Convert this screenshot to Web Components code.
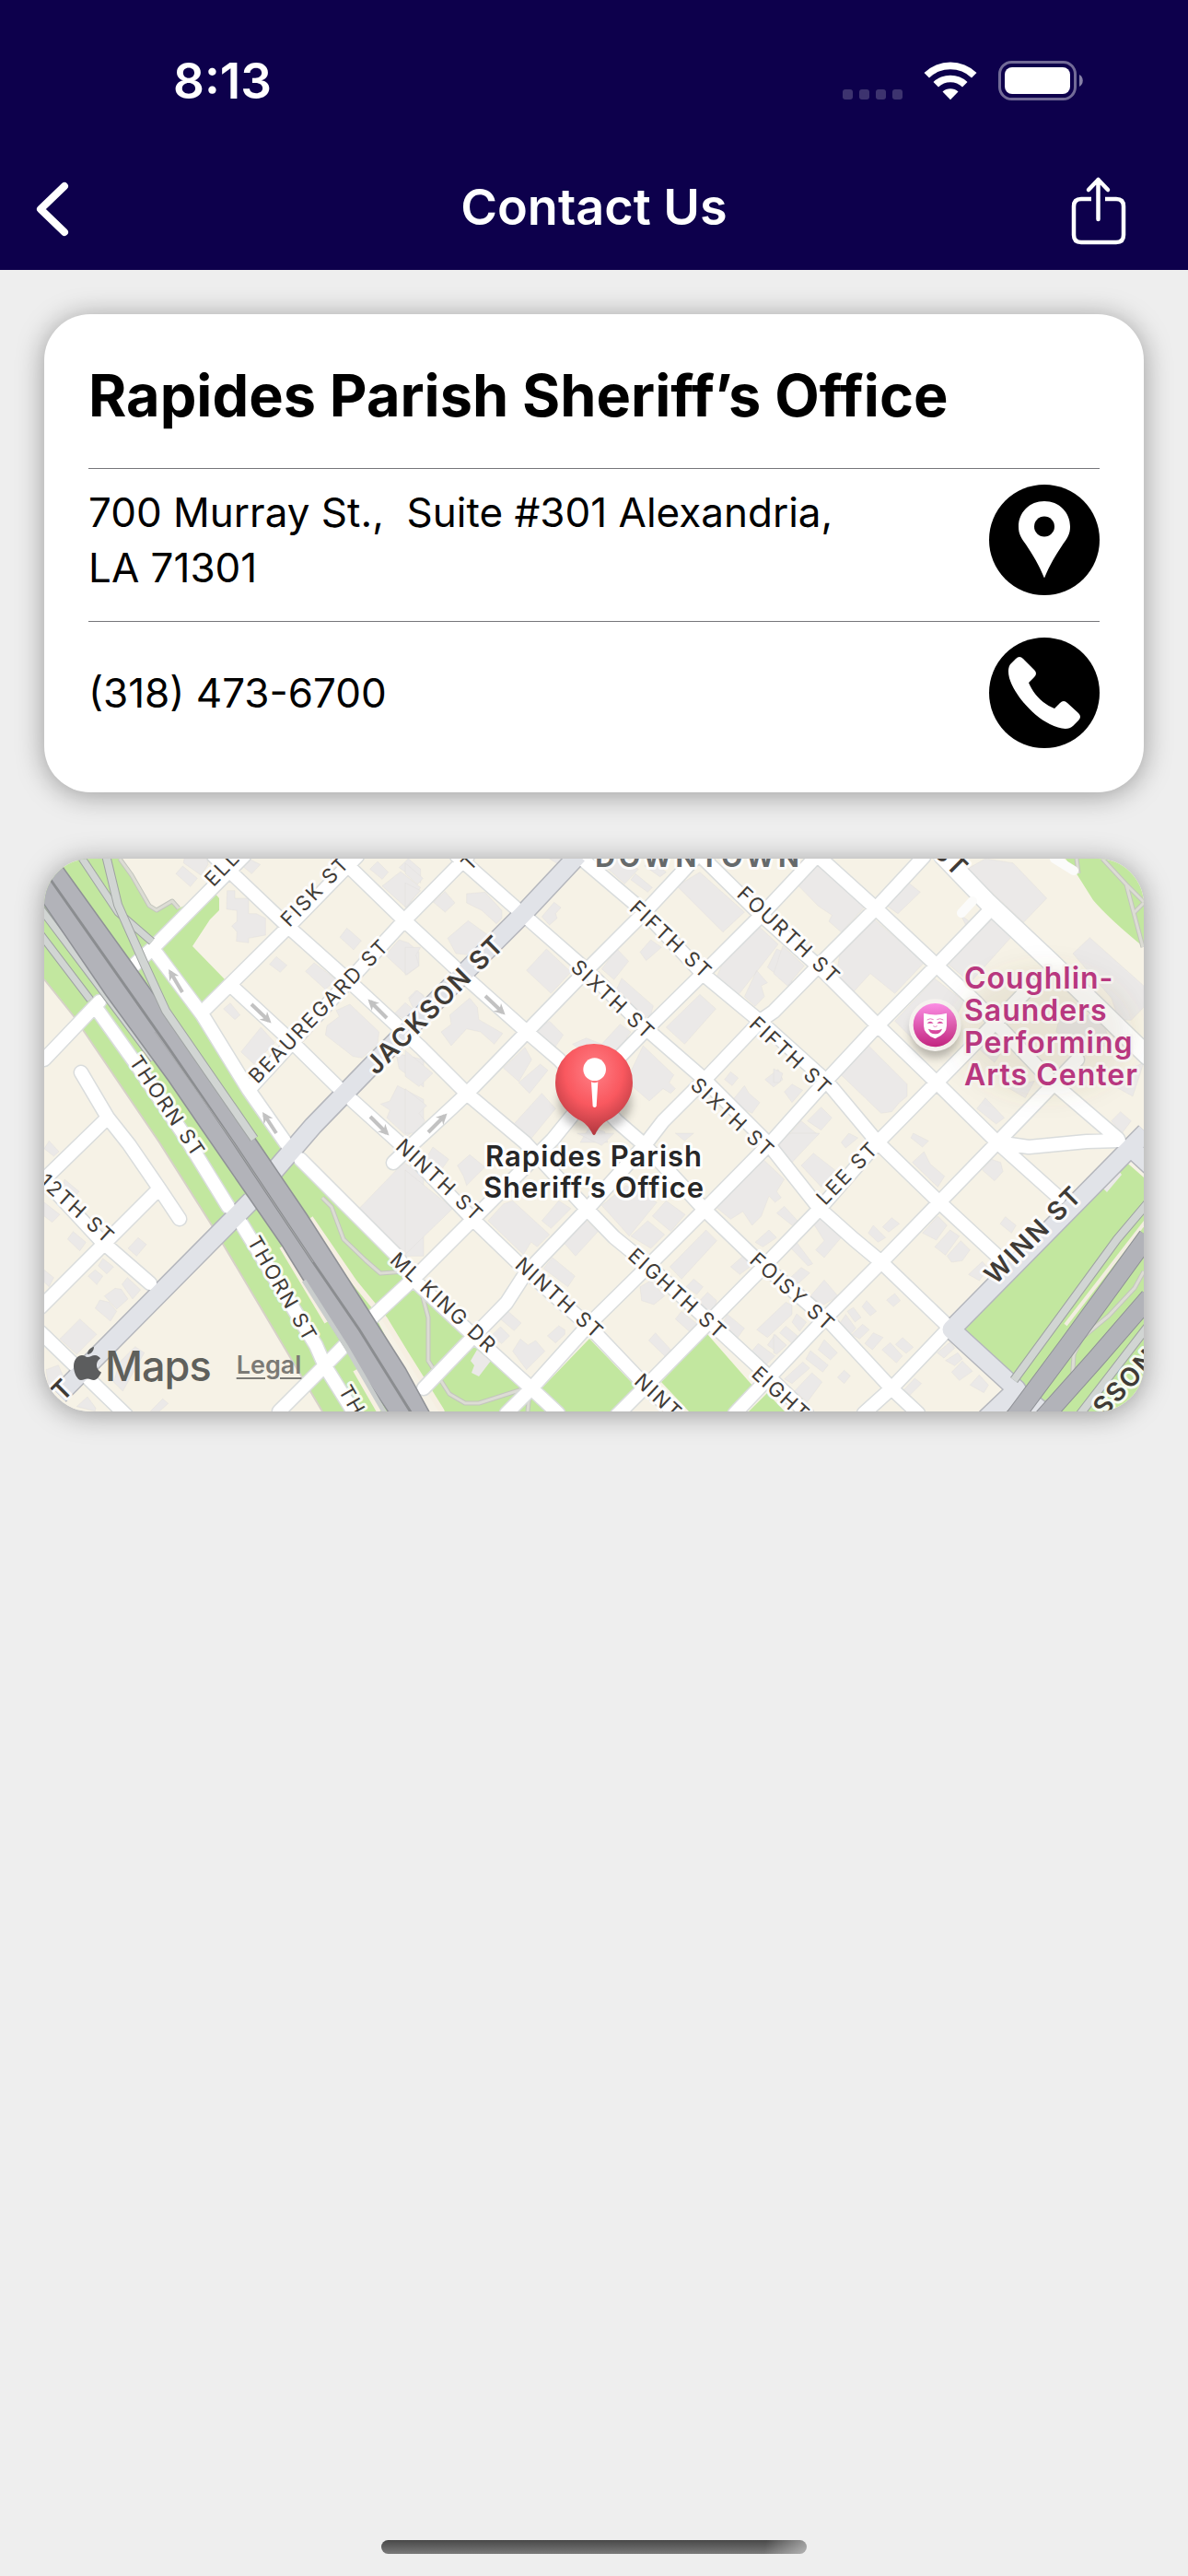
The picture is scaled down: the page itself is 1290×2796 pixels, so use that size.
<!DOCTYPE html>
<html lang="en">
<head>
<meta charset="utf-8">
<meta name="viewport" content="width=device-width, initial-scale=1">
<title>Contact Us</title>
<style>
html, body { margin: 0; background: #eee; }
body { font-family: Inter, "Liberation Sans", sans-serif; color: #000; }
</style>
</head>
<body>
<contact-page>
  <status-bar slot="top" time="8:13"></status-bar>
  <nav-bar slot="top">Contact Us</nav-bar>
  <contact-card>
    <span slot="name">Rapides Parish Sheriff’s Office</span>
    <contact-row icon="place" href="#directions" label="Directions">700 Murray St.,&nbsp; Suite #301 Alexandria, LA 71301</contact-row>
    <contact-row icon="phone" href="tel:+13184736700" label="Call">(318) 473-6700</contact-row>
  </contact-card>
  <street-map></street-map>
  <home-indicator slot="bottom"></home-indicator>
</contact-page>

<script>
const define = (name, html) => customElements.define(name, class extends HTMLElement {
  connectedCallback() {
    if (this.shadowRoot) return;
    const t = document.createElement('template');
    t.innerHTML = typeof html === 'function' ? html(this) : html;
    this.attachShadow({ mode: 'open' }).append(t.content.cloneNode(true));
  }
});

define('contact-page', `
<style>
:host { display: flex; flex-direction: column; min-height: 100vh; }
header { background: #0d004c; color: #fff; }
main { display: flex; flex-direction: column; gap: 72px; padding: 48px; }
footer { margin-top: auto; }
</style>
<header><slot name="top"></slot></header>
<main><slot></slot></main>
<footer><slot name="bottom"></slot></footer>`);

define('status-bar', el => `
<style>
:host { display: flex; align-items: center; justify-content: space-between; height: 174px; padding: 0 112px 0 188px; }
time { font-size: 53px; font-weight: 600; line-height: 60px; padding-top: 2px; }
div { display: flex; align-items: flex-end; gap: 23px; height: 43px; }
svg { display: block; }
</style>
<time>${el.getAttribute('time')}</time>
<div>
  <svg width="65" height="12" viewBox="0 0 65 12" fill="#fff" fill-opacity=".2"><rect width="11" height="11" rx="3"/><rect x="18" width="11" height="11" rx="3"/><rect x="36" width="11" height="11" rx="3"/><rect x="54" width="11" height="11" rx="3"/></svg>
  <svg width="58" height="43" viewBox="0 0 58 43" fill="#fff"><path d="M.5 13 A41 41 0 0 1 57.500 13 L52 18.500 A33 33 0 0 0 6 18.500Z"/><path d="M10.500 23 A27 27 0 0 1 47.500 23 L42 28.500 A19 19 0 0 0 16 28.500Z"/><path d="M20.500 33.500 A13 13 0 0 1 37.500 33.500 L29 42.300Z"/></svg>
  <svg width="94" height="43" viewBox="0 0 94 43"><rect x="1.500" y="1.500" width="82" height="40" rx="13" fill="none" stroke="#fff" stroke-opacity=".42" stroke-width="3"/><rect x="7" y="7" width="71" height="29" rx="8" fill="#fff"/><path d="M88 15 A7.500 7.500 0 0 1 88 28Z" fill="#fff" fill-opacity=".5"/></svg>
</div>`);

define('nav-bar', `
<style>
:host { display: grid; grid-template-columns: 140px 1fr 140px; align-items: center; height: 101px; padding-bottom: 18px; }
h1 { margin: 0; font-size: 54px; font-weight: 600; line-height: 66px; text-align: center; }
button { display: flex; background: none; border: 0; margin: 0; padding: 4px 0 0; color: inherit; width: 100%; }
.back { padding-left: 36px; }
.share { justify-content: flex-end; padding: 8px 67px 0 0; }
</style>
<button class="back" aria-label="Back"><svg width="42" height="64" viewBox="0 0 42 64" fill="none" stroke="#fff" stroke-width="8" stroke-linecap="round" stroke-linejoin="round"><path d="M34 7 L8 32 L34 57"/></svg></button>
<h1><slot></slot></h1>
<button class="share" aria-label="Share"><svg width="61" height="76" viewBox="0 0 61 76" fill="none" stroke="#fff" stroke-width="4.500" stroke-linecap="round" stroke-linejoin="round"><path stroke-linecap="butt" d="M23 25 H12 Q4 25 4 33 V64 Q4 72 12 72 H50 Q58 72 58 64 V33 Q58 25 50 25 H38"/><path d="M30.500 47 V4 M20 15 L30.500 4 L41 15"/></svg></button>`);

define('contact-card', `
<style>
:host { display: block; background: #fff; border-radius: 50px; padding: 0 48px 20px; box-shadow: 0 3px 30px rgba(0,0,0,.36); }
h2 { margin: 0; padding: 48px 0 39px; font-size: 63px; font-weight: 700; line-height: 80px; }
</style>
<h2><slot name="name"></slot></h2>
<slot></slot>`);

const rowIcons = {
  place: '<path fill="#fff" d="M60 18 C44 18 32 30 32 45.500 C32 54 35 58 40 65 C48 77 54 87 60 101.500 C66 87 72 77 80 65 C85 58 88 54 88 45.500 C88 30 76 18 60 18Z"/><circle cx="60" cy="45.500" r="11"/>',
  phone: '<path fill="#fff" d="M29 23 Q33 19 37 23 L49 35 Q53 39 49 43 L43 49 C48 61 58 72 71 77 L77 71 Q81 67 85 71 L97 82 Q101 86 97 90 L91 96 C86 101 76 99 66 94 C46 84 27 61 22 44 C20 36 21 31 24 28Z"/>'
};
define('contact-row', el => `
<style>
:host { display: flex; align-items: flex-start; justify-content: space-between; gap: 80px; border-top: 1px solid #76767a; padding: 17px 0 28px; }
p { margin: 0; flex: 1; max-width: 860px; min-height: 120px; display: flex; align-items: center; font-size: 44px; line-height: 60px; }
a, svg { display: block; color: #000; }
</style>
<p><span><slot></slot></span></p>
<a href="${el.getAttribute('href')}" aria-label="${el.getAttribute('label')}"><svg width="120" height="120" viewBox="0 0 120 120"><circle cx="60" cy="60" r="60"/>${rowIcons[el.getAttribute('icon')]}</svg></a>`);

/* ---- street map: geometry in map units, origin of the view at 48,932 ---- */
const streets = [
  '48,1150 108,1087', '145,1048 165,1030 265,929', '220,1098 312,1007 388,929', '270,1183 440,998 508,929',
  '427,1262 450,1240 490,1203 507,1187 572,1120 637,1053 700,990 757,929',
  '303,1532 355,1480 407,1427 450,1387 512,1325 600,1237 673,1147 702,1117 763,1057 823,997 886,930',
  '460,1507 510,1455 550,1414 570,1383 637,1313 700,1243 720,1217 767,1170 827,1107 840,1098 890,1047 950,987 1003,930',
  '550,1534 577,1507 640,1437 700,1378 765,1313 840,1237 897,1173 953,1113 1017,1048 1073,990',
  '670,1536 703,1503 768,1437 828,1376 890,1312 953,1240 1017,1175 1120,1070',
  '798,1534 840,1490 897,1430 957,1370 1020,1305 1083,1240 1170,1150', '938,1534 968,1507 1030,1442',
  '232,929 312,1005 377,1063 457,1137 507,1187 570,1240 637,1312 667,1343 700,1370 773,1437 823,1483 876,1534',
  '367,929 440,1000 508,1063 572,1120 607,1150 670,1217 700,1243 765,1313 817,1363 903,1437 968,1507 997,1534',
  '496,929 573,997 637,1053 702,1117 763,1170 833,1240 890,1312 927,1345 957,1370 1030,1440',
  '628,929 700,990 763,1057 827,1110 897,1173 953,1240 1020,1305 1087,1367',
  '761,929 823,990 890,1050 953,1113 1017,1175 1083,1240 1150,1300', '888,929 950,985 1017,1048 1060,1088 1143,1175 1214,1236',
  '250,1069 313,1127 370,1183 433,1240 513,1323 570,1378 640,1440 700,1503 733,1534',
  '105,1095 150,1158 200,1232 248,1310', '262,1328 300,1390 343,1460 353,1483 386,1536',
  '170,1035 220,1102 270,1183 317,1250', '326,1258 430,1362 447,1387 507,1443 577,1507 606,1534',
  '88,1164 117,1213 140,1242 173,1290 195,1323', '117,1213 44,1284', '173,1290 44,1419',
  '44,1276 110,1347 163,1393', '44,1446 137,1536', '1083,1240 1117,1245 1180,1239 1215,1238'
];
const avenues = ['64,1514 273,1303', '290,1280 340,1222 407,1153 567,993 628,928', '1244,1229 1033,1443 1104,1508 1064,1546', '1227,1245 1252,1268', '1110,1514 1134,1534'];
const joined = list => list.map(p => 'M' + p.replace(/ /g, 'L')).join('');

const tiles = [
 [40, 920, '480,36 555,36 558,55 535,90 478,50|475,60 523,100 500,127 453,85|690,36 728,55 700,85 672,62|620,140 645,140 645,165 690,165 690,215 715,215 745,230 745,285 690,295 690,310 650,305 652,275 635,255 652,240 652,205 618,200|780,355 815,383 793,406 758,380|1010,262 1057,303 1032,333 987,292|903,375 975,430 940,462 875,403|630,506 662,545 645,560 608,525|730,585 775,635 707,705 665,665|1020,510 1115,600 1110,640 1060,685 1030,680 940,610 945,580 985,550 975,530|1110,45 1145,80 1125,103 1085,70|1185,78 1250,130 1205,197 1125,125|1210,36 1250,70 1250,115 1180,65|1180,300 1210,310 1245,340 1245,385 1205,415 1135,350|1170,670 1260,690 1260,780 1180,720|1175,775 1260,820 1260,900 1205,940 1140,880 1150,855 1120,835 1150,825|1235,465 1260,480 1260,510 1210,490|1200,505 1230,530 1200,560 1165,540'],
 [440, 920, '0,50 58,100 40,120 0,85|0,115 50,140 0,195|130,143 162,180 130,210 92,178|200,150 260,145 315,205 315,230 297,248 250,205 200,180|205,238 270,285 255,310 215,350 165,345 138,295|0,325 50,325 35,350 45,385 0,415|485,178 507,195 490,215 495,230 470,252 445,225|460,330 540,405 475,475 395,400|40,465 75,500 30,530 12,495|210,490 235,520 240,560 318,605 290,640 245,600 200,590 150,645 117,600 150,575 145,545|470,565 515,610 485,655 415,600|590,620 640,640 700,575 735,600 680,680 630,700 545,640|690,330 728,370 680,430 640,395|800,300 835,325 785,368 765,340|705,425 808,515 800,545 760,560 680,480|960,80 1105,210 1035,275 885,125|690,36 760,70 715,118 650,60|750,85 805,130 790,145 735,105|800,36 850,80 830,95 780,60|960,478 1012,525 910,640 850,585|775,645 875,740 860,765 880,785 865,800 840,785 795,825 720,760|1145,250 1215,315 1085,480 1015,420 1035,375|1210,330 1260,350 1260,455 1180,390|1145,400 1180,440 1160,450 1170,485 1140,517 1105,485|1215,722 1230,755 1200,780 1172,755|1060,730 1085,750 1065,775 1040,755|1105,775 1120,800 1155,830 1130,865 1060,830|0,660 90,735 45,778 0,745|0,785 70,840 45,865 65,890 30,930 0,930|390,650 412,690 370,762 320,718|440,705 465,725 405,800 370,765|445,800 490,850 400,960 385,960 345,910|600,910 650,925 660,960 570,960|470,36 515,36 500,55'],
 [840, 920, '135,50 300,190 220,275 180,240 190,220 145,190 72,115|440,115 478,145 405,215 370,190|690,36 780,50 890,165 815,243 630,70|330,235 490,375 395,475 315,410 260,470 205,410 215,350|715,215 780,285 640,440 570,380|1030,293 1206,450 1206,520 1165,562 1125,560 1100,490 975,345|525,427 620,500 580,580 600,620 470,640 395,565|310,645 435,770 435,810 410,830 385,860 350,865 220,740|30,320 100,385 45,450 0,410|155,845 190,880 155,920 110,890|690,815 752,880 725,900 662,850|1130,860 1165,890 1135,930 1100,890|90,890 145,935 110,960 30,960|60,770 95,790 60,830 35,795|0,720 30,735 20,765 0,765|930,560 1060,540 1100,640 1020,660 920,600|690,600 760,640 720,700 650,640|760,780 850,760 820,815|1080,760 1206,700 1170,810|610,220 635,238 625,250'],
 [40, 1230, '40,25 72,60 55,75 24,50|90,150 138,190 118,212 85,180|24,225 75,265 50,290 24,270|118,320 160,355 140,383 100,345|330,340 357,362 325,400 297,375|215,408 250,435 228,458 200,432|190,445 215,465 195,493 167,465|24,445 55,470 40,500 24,485|295,470 338,510 312,540 277,492|255,505 275,508 297,540 260,573 220,530|205,543 235,550 260,580 240,612 190,570|140,605 195,655 130,720 75,670|320,695 350,715 280,840 250,810 270,745|410,865 428,880 400,905 370,905|165,858 192,895 190,905 130,890|30,770 70,755 90,800 40,840|1195,95 1260,140 1260,400 1200,400 1050,245'],
 [440, 1230, '0,120 155,245 0,395|90,45 142,85 110,130 60,95|210,70 260,110 200,170 190,140 170,105|350,220 470,330 430,370 410,355 385,395 270,285 320,230|500,220 540,245 475,310 445,285|590,285 628,320 555,400 515,355|480,405 553,465 530,500 450,440|335,580 378,618 355,643 310,605|310,630 340,660 315,685 280,660|375,670 400,690 425,675 455,710 395,770 350,710|500,627 520,640 520,655 490,683 463,660|640,235 720,170 820,225 730,335|790,285 845,330 800,375 735,335|850,220 912,265 865,320 805,270|980,315 1015,350 900,475 862,435|765,500 800,480 845,530 810,558 770,545|815,650 865,705 845,725 793,675|900,580 950,620 925,645 880,605|940,475 970,500 950,525 915,500|985,518 1015,545 1000,590 955,550|1155,75 1235,150 1210,190 1225,210 1205,225 1185,205 1160,270 1130,300 1100,255 1060,280 1005,235|1185,315 1210,340 1165,370 1140,355|1050,590 1105,635 1080,670 1030,625|1100,400 1130,430 1090,460 1060,435|1240,550 1260,560 1260,590 1180,665 1145,640|1150,685 1205,725 1170,760 1120,720|1205,655 1240,690 1215,715 1180,690|880,0 940,0 910,25|560,0 680,0 640,40'],
 [840, 1230, '20,10 60,0 150,0 60,95 20,60|130,65 200,120 155,175 90,105|245,0 275,15 235,48 220,30|455,0 505,25 485,45 447,15|490,60 510,100 557,140 535,175 452,95|710,85 740,95 747,125 720,155 680,120|755,272 790,300 775,325 738,295|385,275 410,295 375,322 355,305|325,300 365,340 340,355 308,325|535,270 565,300 530,348 485,325|575,315 605,335 560,397 525,370|610,350 640,380 615,415 580,420 565,400|680,418 700,440 670,480 635,460|150,270 220,340 165,405 137,380 165,350 130,295|75,355 128,425 112,432 52,370|90,437 118,455 80,490 55,470|165,478 210,530 160,560 120,530|35,238 78,285 60,300 10,260|395,522 413,545 390,565 368,543|303,545 335,580 315,595 288,565|260,567 285,600 265,615 240,580|235,590 268,635 250,655 215,620|290,622 312,640 280,670 255,655|325,650 357,665 322,705 297,685|380,682 420,725 400,748 353,705|420,665 455,697 432,717 397,688|165,672 208,715 185,738 145,705|120,708 178,755 160,778 105,735|0,655 42,690 10,720 0,715|75,588 107,615 85,645 60,615|40,628 78,660 60,685 20,650|125,780 158,810 110,875 68,840|230,772 250,790 230,815 208,795|575,680 590,700 555,732 533,715|600,715 615,735 590,757 560,740|615,742 648,775 605,805 580,778|670,787 700,820 685,845 640,820|460,798 482,815 445,852 425,835|95,745 118,765 60,815 35,800']
];
const buildings = tiles.map(([x, y, d]) => `<path transform="translate(${x} ${y}) scale(.33333)" d="${d.split('|').map(p => 'M' + p.replace(/ /g, 'L') + 'Z').join('')}"/>`).join('');

/* label: text, x, y, angle, anchor, class */
const labels = [
  ['ELL', 226, 958, -46, 'start'], ['FISK ST', 342, 967, -46], ['BEAUREGARD ST', 346, 1097, -46], ['T', 510, 935, -46],
  ['THORN ST', 182, 1201, 56], ['THORN ST', 307, 1399, 60], ['TH', 374, 1505, 60, 'start'], ['12TH ST', 84, 1312, 42],
  ['NINTH ST', 478, 1281, 43], ['NINTH ST', 608, 1409, 42], ['SIXTH ST', 666, 1085, 43], ['SIXTH ST', 796, 1213, 43],
  ['FIFTH ST', 729, 1020, 43], ['FIFTH ST', 859, 1146, 43], ['FOURTH ST', 857, 1015, 43], ['EIGHTH ST', 736, 1404, 42],
  ['EIGHT', 820, 1487, 42, 'start'], ['FOISY ST', 861, 1402, 42], ['ML KING DR', 482, 1414, 43], ['NINT', 693, 1495, 43, 'start'],
  ['LEE ST', 920, 1273, -46],
  ['JACKSON ST', 472, 1090, -45, 'middle', 'big'], ['WINN ST', 1122, 1340, -45, 'middle', 'big'],
  ['ST', 1047, 947, 45, 'end', 'big'], ['SSON', 1192, 1532, -47, 'start', 'big'], ['T', 68, 1508, -45, 'middle', 'big']
].map(([t, x, y, a, anchor = 'middle', c = 'st']) => `<text class="${c}" text-anchor="${anchor}" transform="translate(${x} ${y}) rotate(${a})" dy="${c === 'big' ? 10 : 8}">${t}</text>`).join('');
const arrows = ['198,1077 185,1055', '273,1090 292,1108', '420,1105 402,1087', '300,1230 287,1210', '402,1212 420,1230', '527,1081 546,1099', '465,1229 483,1211'];
const trails = 'M130 932 L143 950 L162 983 L170 988 L187 978 L194 986 M350 1300 L360 1310 L373 1345 L397 1368 L413 1382 L440 1380 M457 1400 L465 1430 V1477 L488 1513 L505 1523 H520 L567 1508 M575 1512 L573 1532 M1197 932 L1223 960 L1242 979 M1223 960 L1241 1028 M1169 932 L1171 948 M1232 990 L1242 980 M1136 1522 L1164 1505 L1166 1470 L1175 1452 L1204 1428 L1232 1398 L1242 1380';

define('street-map', `
<style>
:host { display: block; position: relative; border-radius: 50px; box-shadow: 0 3px 30px rgba(0,0,0,.36); overflow: hidden; }
.map { display: block; width: 100%; height: auto; }
text { paint-order: stroke; stroke: #fff; stroke-opacity: .85; stroke-width: 6px; stroke-linejoin: round; font-family: Inter, "Liberation Sans", sans-serif; }
.st { font-size: 22px; letter-spacing: 2px; fill: #3f3b36; }
.big { font-size: 28px; font-weight: 600; letter-spacing: 2px; fill: #3f3b36; }
.area { font-size: 30px; font-weight: 700; letter-spacing: 4px; fill: #666a6b; }
.poi { font-size: 32px; font-weight: 600; letter-spacing: 1px; fill: #b8377f; stroke: #f6f3f0; }
.here { font-size: 31px; font-weight: 600; letter-spacing: 1px; fill: #272727; text-anchor: middle; stroke-opacity: 1; }
.credit { position: absolute; left: 32px; bottom: 19px; display: flex; align-items: baseline; color: #5f605b; }
.credit svg { margin-right: 4px; }
.credit b { font-size: 45px; font-weight: 500; line-height: 60px; margin-right: 28px; letter-spacing: -1px; }
.credit a { font-size: 27px; font-weight: 600; line-height: 36px; padding-bottom: 3px; align-self: center; color: #7b7a75; text-underline-offset: 4px; }
</style>
<svg class="map" viewBox="48 932 1194 600" role="img" aria-label="Map">
<defs>
  <radialGradient id="pin" cx=".5" cy=".3" r=".75"><stop offset="0" stop-color="#ff7f86"/><stop offset=".5" stop-color="#f9585f"/><stop offset="1" stop-color="#a5323a"/></radialGradient>
  <linearGradient id="poi" x2="0" y2="1"><stop offset="0" stop-color="#fb8ee4"/><stop offset="1" stop-color="#c3257f"/></linearGradient>
  <marker id="tip" viewBox="0 0 10 10" refX="7" refY="5" markerWidth="3" markerHeight="3" orient="auto"><path d="M0 0 L10 5 L0 10 L3 5Z" fill="#c2c2c2"/></marker>
  <filter id="soft" x="-50%" y="-50%" width="200%" height="200%"><feGaussianBlur stdDeviation="14"/></filter>
</defs>
<rect x="48" y="932" width="1194" height="600" fill="#f6f2e6"/>
<g fill="#c2e79f">
  <path d="M48 932 H130 L143 950 L162 983 L170 988 L187 978 L194 986 L232 968 L238 975 V988 L228 998 L209 1027 L244 1063 L217 1093 L220 1110 L317 1250 L326 1262 L447 1387 L577 1507 L603 1532 H483 L440 1468 L417 1430 L403 1420 L460 1532 H350 L230 1330 L173 1240 L80 1103 L48 1063Z"/>
  <path d="M640 1453 L588 1507 L612 1532 H670 L692 1507Z M768 1448 L718 1500 L748 1532 H795 L818 1505Z M833 1512 L813 1532 H852Z"/>
  <path d="M1042 1440 L1218 1257 L1242 1278 V1532 H1080 L1108 1505 L1098 1492Z M1157 932 L1170 950 L1187 977 Q1205 998 1242 1028 V932Z"/>
</g>
<path d="M48 1063 L80 1103 L173 1240 L230 1330 L350 1532" fill="none" stroke="#d6d1c8" stroke-width="2"/>
<path d="M337 1322 L385 1392 L418 1432 L440 1468 L480 1532 M306 1353 L355 1435 M386 1487 L412 1532" fill="none" stroke="#f6efe2" stroke-width="6"/>
<g fill="#ebe9e8" stroke="#dedcd9" stroke-width="1">${buildings}</g>
<path d="M518 1465 L533 1477 L520 1494 L512 1490 L515 1482 L511 1477Z M1213 1268 L1218 1275 L1202 1294 L1195 1287Z" fill="#ebe9e8"/>
<g fill="none" stroke-linejoin="round">
  <path d="${trails}" stroke="#c3c5bd" stroke-width="5"/>
  <path d="${trails}" stroke="#dcdcd4" stroke-width="3"/>
  <g stroke-linecap="round">
    <path d="${joined(streets)}" stroke="#d9dcdc" stroke-width="17"/>
    <path d="M1024 929 L1073 980 L1140 1043 L1246 1146" stroke="#d9dcdc" stroke-width="22"/>
    <path d="${joined(avenues)}" stroke="#b4b6bc" stroke-width="22" stroke-linecap="butt"/>
    <path d="${joined(streets)}" stroke="#fff" stroke-width="14"/>
    <path d="M1024 929 L1073 980 L1140 1043 L1246 1146" stroke="#fff" stroke-width="19"/>
    <path d="M1044 991 L1056 978 M1145 932 L1166 945" stroke="#fbfbfa" stroke-width="10"/>
    <path d="${joined(avenues)}" stroke="#e1e3e8" stroke-width="19" stroke-linecap="butt"/>
  </g>
  <g stroke="#9fa3a2"><path d="M88 930 L128 990 L165 1022" stroke-width="9"/><path d="M44 1014 L98 1085 M44 986 L120 1087 L167 1150" stroke-width="9"/><path d="M1101 1498 L1213 1345 L1246 1306 M1172 1536 L1246 1440" stroke-width="10"/></g>
  <g stroke="#d1d5d3"><path d="M88 930 L128 990 L165 1022" stroke-width="7"/><path d="M44 1014 L98 1085 M44 986 L120 1087 L167 1150" stroke-width="7"/><path d="M1101 1498 L1213 1345 L1246 1306 M1172 1536 L1246 1440" stroke-width="8"/></g>
  <path d="M1157 1438 L1246 1323" stroke="#f2ede0" stroke-width="4"/>
  <path d="M1096 1546 L1160 1460 L1246 1342 M1132 1540 L1190 1475 L1248 1408" stroke="#8f9196" stroke-width="21"/>
  <path d="M1096 1546 L1160 1460 L1246 1342 M1132 1540 L1190 1475 L1248 1408" stroke="#b2b3b9" stroke-width="19"/>
</g>
<path d="M44 910 L68 941 L143 1045 L280 1240 L333 1318 L403 1427 L440 1485 L468 1536 H424 L373 1460 L307 1353 L222 1230 L183 1173 L115 1080 L44 976Z" fill="#b2b3b9" stroke="#8f9196" stroke-width="1.500"/>
<g fill="none"><path d="M55 955 L183 1137 L252 1238 L340 1370 L390 1443 L448 1536" stroke="#8b8d90" stroke-width="3"/><path d="M168 1120 L252 1238 L340 1370" stroke="#a9aaac" stroke-width="1"/>
<path d="M115 928 L128 982 L157 1047 L180 1097 L276 1236" stroke="#9fa3a2" stroke-width="10"/><path d="M115 928 L128 982 L157 1047 L180 1097 L276 1236" stroke="#d1d5d3" stroke-width="8"/>
<path d="M330 1390 L376 1462 L418 1534" stroke="#c9cdcc" stroke-width="5"/></g>
<g fill="none" stroke="#c2c2c2" stroke-width="4">${arrows.map(a => `<path d="M${a.replace(' ', 'L')}" marker-end="url(#tip)"/>`).join('')}</g>
<text class="area" x="759" y="941" text-anchor="middle">DOWNTOWN</text>
${labels}
<g transform="translate(840 920) scale(.33333)">
  <ellipse cx="526" cy="605" rx="80" ry="80" fill="#000" fill-opacity=".25" filter="url(#soft)"/>
  <circle cx="526" cy="578" r="85" fill="#f5f2ee"/><circle cx="526" cy="578" r="71" fill="url(#poi)"/>
  <path fill="#fff" d="M489 539 Q526 550 564 539 V580 Q564 608 526 622 Q489 608 489 580Z"/>
  <path fill="#d8489f" d="M500 572 Q510 560 521 572Z M532 572 Q542 560 553 572Z M504 590 Q526 600 549 590 Q544 607 526 607 Q509 607 504 590Z"/>
  <path fill="none" stroke="#e77fc0" stroke-width="3" d="M500 561 Q510 554 521 560 M532 560 Q542 554 553 561 M520 581 Q526 586 533 581"/>
</g>
<ellipse cx="1135" cy="1120" rx="95" ry="68" fill="#6b5a3a" fill-opacity=".1" filter="url(#soft)"/>
<text class="poi"><tspan x="1047" y="1073">Coughlin-</tspan><tspan x="1047" y="1108">Saunders</tspan><tspan x="1047" y="1143">Performing</tspan><tspan x="1047" y="1178">Arts Center</tspan></text>
<text class="here"><tspan x="645" y="1266">Rapides Parish</tspan><tspan x="645" y="1300">Sheriff’s Office</tspan></text>
<g transform="translate(440 920) scale(.33333)">
  <ellipse cx="618" cy="830" rx="120" ry="95" fill="#000" fill-opacity=".25" filter="url(#soft)"/>
  <path fill="url(#pin)" d="M615 639 A125 125 0 0 1 741 765 C741 825 700 868 660 888 C638 900 627 918 620 932 Q615 940 610 932 C603 918 592 900 570 888 C530 868 489 825 489 765 A125 125 0 0 1 615 639Z"/>
  <circle cx="617" cy="722" r="37" fill="#fff"/><path fill="#fff" d="M606 763 Q617 768 628 763 L623 842 Q617 850 611 842Z"/>
</g>
</svg>
<div class="credit">
  <svg width="30" height="37" viewBox="0 0 30 37" fill="#5c5d5e"><path d="M15 11 C18 11 20 9 23 9 C26 9 28 11 29 12.500 C23 16 24 25 30 27.500 C28 32 25 36 22 36 C19 36 18 34.500 15 34.500 C12 34.500 11 36 8 36 C4 36 0 28 0 21 C0 13 5 9 9 9 C12 9 13 11 15 11Z M15 8 C15 4 18 .5 22 0 C22 4 19 8 15 8Z"/></svg>
  <b>Maps</b><a href="#legal">Legal</a>
</div>`);

define('home-indicator', `
<style>
:host { display: flex; justify-content: center; padding-bottom: 24px; }
span { width: 462px; height: 15px; border-radius: 8px; background: linear-gradient(100deg, transparent 90%, rgba(237,237,237,.5)), linear-gradient(#484848, #7a7a7a); }
</style>
<span></span>`);
</script>
</body>
</html>
